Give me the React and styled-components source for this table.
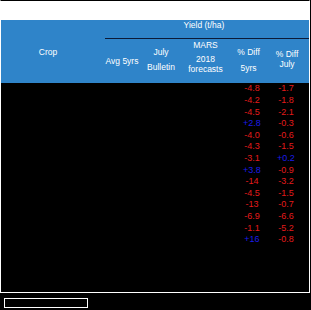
import React from "react";
import styled, { createGlobalStyle } from "styled-components";

const Global = createGlobalStyle`
  html, body { margin: 0; padding: 0; background: #000; }
  body { font-family: "Liberation Sans", Arial, sans-serif; }
`;

const Frame = styled.div`
  width: 310px;
  height: 293px;
  box-sizing: border-box;
  border: 1px solid #fff;
  border-top-color: #000;
  display: flex;
  flex-direction: column;
`;

const Caption = styled.div`
  height: 19px;
  background: #fff;
`;

const Header = styled.div`
  display: grid;
  grid-template-columns: 104px 34px 44px 45px 41px 40px;
  grid-template-rows: 18px 1px 44px;
  background: #2f84c9;
  color: #fff;
  font-size: 8.5px;
`;

const HCell = styled.div`
  display: flex;
  flex-direction: column;
  align-items: center;
  grid-column: ${(p) => p.$col};
  grid-row: ${(p) => p.$row};
  padding-right: ${(p) => p.$pr || 0}px;
  padding-top: ${(p) => p.$pt || 0}px;
`;

const Rule = styled.div`
  grid-column: 2 / 7;
  grid-row: 2;
  background: #0b1a38;
`;

const Line = styled.span`
  display: block;
  line-height: 8px;
  white-space: nowrap;
  margin-top: ${(p) => p.$top || 0}px;
`;

const Body = styled.div`
  flex: 1;
  background: #000;
  padding-top: 0.2px;
  font-size: 9px;
`;

const Row = styled.div`
  display: grid;
  grid-template-columns: 232px 38px 30px;
  height: 11.6px;
  align-items: center;
  line-height: 9px;
`;

const Val = styled.span`
  grid-column: ${(p) => p.$col};
  text-align: center;
  color: ${(p) => (p.$pos ? "#1c1ce8" : "#e41b1b")};
`;

const Pager = styled.div`
  margin: 5px 0 0 4px;
  width: 84px;
  height: 10px;
  box-sizing: border-box;
  border: 1px solid #fff;
`;

const rows = [
  ["-4.8", "-1.7"],
  ["-4.2", "-1.8"],
  ["-4.5", "-2.1"],
  ["+2.8", "-0.3"],
  ["-4.0", "-0.6"],
  ["-4.3", "-1.5"],
  ["-3.1", "+0.2"],
  ["+3.8", "-0.9"],
  ["-14", "-3.2"],
  ["-4.5", "-1.5"],
  ["-13", "-0.7"],
  ["-6.9", "-6.6"],
  ["-1.1", "-5.2"],
  ["+16", "-0.8"],
];

export default function App() {
  return (
    <>
      <Global />
      <Frame>
        <Caption />
        <Header>
          <HCell $col="1" $row="1 / 4" $pt={28} $pr={10}>
            <Line>Crop</Line>
          </HCell>
          <HCell $col="2 / 7" $row="1" $pt={1} $pr={6}>
            <Line>Yield (t/ha)</Line>
          </HCell>
          <Rule />
          <HCell $col="2" $row="3" $pt={18}>
            <Line>Avg 5yrs</Line>
          </HCell>
          <HCell $col="3" $row="3" $pt={9}>
            <Line>July</Line>
            <Line $top={7}>Bulletin</Line>
          </HCell>
          <HCell $col="4" $row="3" $pt={2}>
            <Line>MARS</Line>
            <Line $top={6}>2018</Line>
            <Line $top={1.5}>forecasts</Line>
          </HCell>
          <HCell $col="5" $row="3" $pt={9}>
            <Line>% Diff</Line>
            <Line $top={8}>5yrs</Line>
          </HCell>
          <HCell $col="6" $row="3" $pt={11} $pr={4}>
            <Line>% Diff</Line>
            <Line $top={1.5}>July</Line>
          </HCell>
        </Header>
        <Body>
          {rows.map(([a, b], i) => (
            <Row key={i}>
              <Val $col="2" $pos={a.startsWith("+")}>{a}</Val>
              <Val $col="3" $pos={b.startsWith("+")}>{b}</Val>
            </Row>
          ))}
        </Body>
      </Frame>
      <Pager />
    </>
  );
}
